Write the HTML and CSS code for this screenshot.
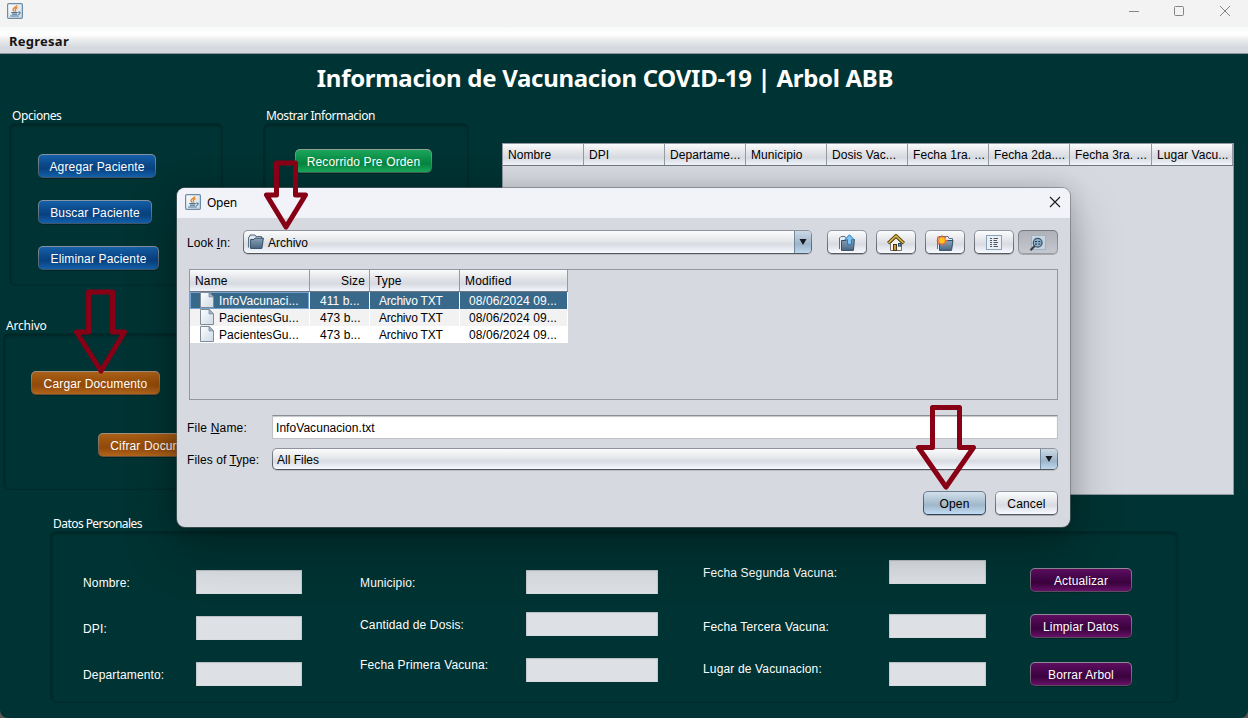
FILE: index.html
```html
<!DOCTYPE html>
<html lang="es">
<head>
<meta charset="utf-8">
<title>Informacion de Vacunacion</title>
<link rel="stylesheet" href="styles.css">
</head>
<body>
<svg class="defs" width="0" height="0">
  <defs>
    <linearGradient id="steel" x1="0" y1="0" x2="0" y2="1"><stop offset="0" stop-color="#88a1b8"/><stop offset="1" stop-color="#4a6782"/></linearGradient>
    <linearGradient id="sheet" x1="0" y1="0" x2="1" y2="1"><stop offset="0" stop-color="#fdfeff"/><stop offset="1" stop-color="#ccd9e4"/></linearGradient>
    <symbol id="java" viewBox="0 0 16 16">
      <rect x=".6" y=".6" width="14.8" height="14.8" rx="1.2" fill="url(#sheet)" stroke="#6c8ba5" stroke-width="1.2"/>
      <path d="M9.9 2.3C9.6 3.9 6 5 6 6.6c0 1 .9 1.5 1.4 2M10.6 4.7C8.7 5.4 7.9 6.2 8.5 7.1c.4.6.2 1-.2 1.4" fill="none" stroke="#e98425" stroke-width="1.3"/>
      <path d="M4.3 9.5h6.4M4.9 11.2h5.3M3 13h8.8M11.3 9.2c2.7-.6 2.2 1.9-.2 2.3" fill="none" stroke="#4b7593" stroke-width="1.2"/>
    </symbol>
    <symbol id="folder" viewBox="0 0 16 16">
      <path d="M.6 13.5V3.2L2 2V1h5l1 1.600h5.500V5" fill="#dde4eb" stroke="#4b647b"/>
      <path d="M2.600 14.400V5.500H6l1-1.400h8.400L13.900 14.400z" fill="url(#steel)" stroke="#354f67"/>
    </symbol>
    <symbol id="doc" viewBox="0 0 14 16">
      <path d="M.5.5h8.700l4.300 4.300v10.700H.5z" fill="url(#sheet)" stroke="#7f8b97"/>
      <path d="M9 .6v4.300h4.400z" fill="#a9bccb" stroke="#6e8395" stroke-width=".7"/>
    </symbol>
    <symbol id="arrow-down" viewBox="0 0 8 7"><path d="M.5.5h7L4 6.600z" fill="#16181b"/></symbol>
  </defs>
</svg>
<div class="window">
  <header class="titlebar">
    <svg class="app-icon"><use href="#java"/></svg>
    <svg class="win-controls" width="104" height="14" viewBox="0 0 104 14">
      <path d="M1 7.5h10" />
      <rect x="46.5" y="2.500" width="9" height="9" rx="1"/>
      <path d="M92 2l10 10M102 2L92 12"/>
    </svg>
  </header>
  <nav class="menubar"><span class="menu-item">Regresar</span></nav>
  <main class="content">
    <h1 class="heading"><span class="heading-text">Informacion de Vacunacion COVID-19 | Arbol ABB</span></h1>
    <div class="upper">
      <div class="left-col">
        <section class="panel opciones">
          <h2 class="panel-title">Opciones</h2>
          <div class="panel-box">
            <button class="btn blue agregar">Agregar Paciente</button>
            <button class="btn blue buscar">Buscar Paciente</button>
            <button class="btn blue eliminar">Eliminar Paciente</button>
          </div>
        </section>
        <section class="panel archivo">
          <h2 class="panel-title">Archivo</h2>
          <div class="panel-box">
            <button class="btn orange cargar">Cargar Documento</button>
            <button class="btn orange cifrar">Cifrar Documento</button>
          </div>
        </section>
      </div>
      <section class="panel mostrar">
        <h2 class="panel-title">Mostrar Informacion</h2>
        <div class="panel-box"><button class="btn green">Recorrido Pre Orden</button></div>
      </section>
      <div class="patients">
        <div class="patients-head">
          <span>Nombre</span><span>DPI</span><span>Departame...</span><span>Municipio</span><span>Dosis Vac...</span><span>Fecha 1ra. ...</span><span>Fecha 2da....</span><span>Fecha 3ra. ...</span><span>Lugar Vacu...</span>
        </div>
      </div>
    </div>
    <section class="panel datos">
      <h2 class="panel-title">Datos Personales</h2>
      <div class="panel-box">
        <div class="stack labels-a"><label>Nombre:</label><label>DPI:</label><label>Departamento:</label></div>
        <div class="stack fields-a"><i class="field"></i><i class="field"></i><i class="field"></i></div>
        <div class="stack labels-b"><label>Municipio:</label><label>Cantidad de Dosis:</label><label>Fecha Primera Vacuna:</label></div>
        <div class="stack fields-b"><i class="field"></i><i class="field"></i><i class="field"></i></div>
        <div class="stack labels-c"><label>Fecha Segunda Vacuna:</label><label>Fecha Tercera Vacuna:</label><label>Lugar de Vacunacion:</label></div>
        <div class="stack fields-c"><i class="field"></i><i class="field"></i><i class="field"></i></div>
        <div class="stack actions"><button class="btn purple">Actualizar</button><button class="btn purple">Limpiar Datos</button><button class="btn purple">Borrar Arbol</button></div>
      </div>
    </section>
  </main>

  <div class="dialog">
    <header class="dialog-bar">
      <svg class="app-icon"><use href="#java"/></svg>
      <span class="dialog-title">Open</span>
      <svg class="dialog-close" width="12" height="12" viewBox="0 0 12 12"><path d="M1 1l10 10M11 1L1 11"/></svg>
    </header>
    <div class="dialog-body">
      <div class="look-row">
        <span class="look-label">Look <u>I</u>n:</span>
        <div class="combo look-combo">
          <svg class="ico"><use href="#folder"/></svg><span class="combo-text">Archivo</span>
          <span class="combo-arrow"><svg width="8" height="8"><use href="#arrow-down"/></svg></span>
        </div>
        <button class="btn light tool"><svg width="18" height="18" viewBox="0 0 18 18">
          <path d="M1.500 15V4L3 2.500h4l1 1.500" fill="#e6ecf2" stroke="#5b7085"/>
          <path d="M3.500 16.400V6.500H8l1-1h7.400l-1 10.900z" fill="url(#steel)" stroke="#354f67"/>
          <path d="M11.500.8l4.700 5h-2.700v4.500h-4V5.800H6.800z" fill="#7fc4f3" stroke="#2a78b8"/>
        </svg></button>
        <button class="btn light tool"><svg width="18" height="18" viewBox="0 0 18 18">
          <path d="M3.500 9.500v7h11v-7L9 4z" fill="#f6f4ef" stroke="#77716a"/>
          <path d="M1.200 9.300L9 1.800l7.800 7.500" fill="none" stroke="#54430f" stroke-width="3.400"/>
          <path d="M1.600 8.900L9 1.800l7.400 7.100" fill="none" stroke="#d9b246" stroke-width="1.600"/>
          <rect x="6.500" y="10.500" width="3" height="6" fill="#c79b3a" stroke="#4b3b14"/>
          <rect x="11.500" y="9.500" width="2.400" height="2.600" fill="#6fa5d0" stroke="#24435c"/>
        </svg></button>
        <button class="btn light tool"><svg width="18" height="18" viewBox="0 0 18 18">
          <path d="M1.500 15V4L3 2.500h9l1 2h3.500v3" fill="#e6ecf2" stroke="#5b7085"/>
          <path d="M3.500 16.400V7.500H8l1-1h8l-1.500 9.900z" fill="url(#steel)" stroke="#354f67"/>
          <path d="M6 .3l1.200 3.200L10.600 2 9.200 5.200l3 1.300-3 1.300 1.400 3.200-3.400-1.500L6 12.700 4.800 9.500 1.400 11l1.400-3.200-2.800-1.300 2.800-1.300L1.400 2l3.400 1.500z" fill="#f36a32"/>
          <circle cx="6" cy="6.500" r="2.900" fill="#ffc61e"/>
        </svg></button>
        <button class="btn light tool"><svg width="18" height="18" viewBox="0 0 18 18">
          <rect x="1.500" y="1.500" width="15" height="14" fill="#e9eff5" stroke="#8ea2b5"/>
          <path d="M5 4.500h2M5 6.500h2M5 8.500h2M5 10.500h2M5 12.500h2M8.500 4.500H13M8.500 6.500H12M8.500 8.500H13M8.500 10.500H12M8.500 12.500H13" stroke="#4b5661"/>
        </svg></button>
        <button class="btn pressed tool last-tool"><svg width="18" height="18" viewBox="0 0 18 18">
          <rect x="2.500" y="1.500" width="14" height="14" fill="#c8d5e1" stroke="#a0b3c5"/>
          <path d="M6.200 11.500L1.500 16.300" stroke="#39424b" stroke-width="2.200"/>
          <circle cx="8.700" cy="8.800" r="4.400" fill="#8db2cf" stroke="#3f5567" stroke-width="1.300"/>
          <path d="M6 7.500h2M9.200 7.500h2.200M6 10h2M9.200 10h2.200" stroke="#25333f"/>
        </svg></button>
      </div>
      <div class="file-pane">
        <div class="files">
          <div class="file-row file-head"><span>Name</span><span class="size">Size</span><span>Type</span><span>Modified</span></div>
          <div class="file-row selected"><span class="name"><svg class="doc"><use href="#doc"/></svg>InfoVacunaci...</span><span>411 b...</span><span class="kind">Archivo TXT</span><span>08/06/2024 09...</span></div>
          <div class="file-row odd"><span class="name"><svg class="doc"><use href="#doc"/></svg>PacientesGu...</span><span>473 b...</span><span class="kind">Archivo TXT</span><span>08/06/2024 09...</span></div>
          <div class="file-row"><span class="name"><svg class="doc"><use href="#doc"/></svg>PacientesGu...</span><span>473 b...</span><span class="kind">Archivo TXT</span><span>08/06/2024 09...</span></div>
        </div>
      </div>
      <div class="name-row"><span class="row-label">File <u>N</u>ame:</span><div class="name-input">InfoVacunacion.txt</div></div>
      <div class="type-row"><span class="row-label">Files of <u>T</u>ype:</span>
        <div class="combo type-combo"><span class="combo-text">All Files</span><span class="combo-arrow"><svg width="8" height="8"><use href="#arrow-down"/></svg></span></div>
      </div>
      <div class="button-row"><button class="btn default">Open</button><button class="btn light">Cancel</button></div>
    </div>
  </div>

  <svg class="arrows" width="1248" height="718" viewBox="0 0 1248 718">
    <path d="M276.500 163h19v32h10L286 227l-19.500-32h10z"/>
    <path d="M88.500 292h24v40h12L101 371 76.500 332h12z"/>
    <path d="M932.500 407.500h27v40h14L946 487l-27.500-39.500h14z"/>
  </svg>
</div>
</body>
</html>
```

FILE: styles.css
```css
* { box-sizing: border-box; }
body {
  margin: 0;
  width: 1248px;
  height: 718px;
  overflow: hidden;
  background: #5a5652;
  font: 12px/16px "Liberation Sans", Arial, sans-serif;
  letter-spacing: 0.15px;
}
.defs { position: absolute; }
.window {
  position: relative;
  display: flex;
  flex-direction: column;
  width: 1248px;
  height: 718px;
  overflow: hidden;
  border-radius: 0 0 8px 8px;
  background: #003333;
}
.titlebar {
  display: flex;
  justify-content: space-between;
  align-items: flex-start;
  height: 27px;
  padding: 3px 16px 0 7px;
  background: #f3f3f3;
}
.app-icon { width: 16px; height: 16px; flex: none; }
.win-controls { margin-top: 1px; fill: none; stroke: #858585; }
.menubar {
  height: 27px;
  padding: 6px 9px 0;
  border-bottom: 1px solid #8b96a0;
  background: linear-gradient(#f6faf8, #fff 28%, #e9eaec 52%, #d6d9e0 78%, #d5d8df);
}
.menu-item { font: bold 13px/17px "Noto Sans", sans-serif; letter-spacing: 0.25px; color: #161616; }

/* main area */
.content { flex: 1; display: flex; flex-direction: column; color: #fff; }
.heading {
  margin: 0;
  height: 54px;
  padding: 7px 38px 0 0;
  text-align: center;
  font: bold 24px/33px "Noto Sans", sans-serif;
  letter-spacing: -0.3px;
}
.upper { display: flex; height: 408px; padding-left: 3px; }
.left-col { width: 260px; }
.panel-title {
  margin: 0;
  padding-left: 3px;
  height: 15px;
  font: 12px/16px "Noto Sans", sans-serif;
  letter-spacing: -0.42px;
}
.panel-box {
  border: 1px solid #002b2b;
  border-radius: 6px;
  box-shadow: inset 0 2px 3px rgba(0,20,20,.32), inset 1px 0 2px rgba(0,20,20,.18);
}
.opciones { width: 214px; margin-left: 6px; }
.opciones .panel-box {
  display: flex;
  flex-direction: column;
  align-items: flex-start;
  gap: 22px;
  height: 163px;
  padding: 30px 0 0 28px;
}
.archivo { margin-top: 32px; }
.archivo .panel-title { letter-spacing: -0.2px; }
.archivo .panel-box { height: 157px; padding: 37px 0 0 27px; }
.mostrar { width: 206px; }
.mostrar .panel-box { height: 300px; padding: 25px 0 0 31px; }

/* buttons */
.btn {
  display: block;
  height: 24px;
  padding: 1px 0 0;
  border: 1px solid transparent;
  border-radius: 5px;
  font: inherit;
  letter-spacing: inherit;
  line-height: 22px;
  color: #fff;
  text-align: center;
  box-shadow: 0 1px 0 rgba(0,0,0,.22);
}
.blue { background: linear-gradient(#1660a8, #0b4a8c 40%, #08427f 62%, #1360ab) padding-box, linear-gradient(#8595a3, #3f5468) border-box; }
.orange { background: linear-gradient(#aa6018, #98500b 40%, #92490a 62%, #b1661b) padding-box, linear-gradient(#a09080, #63503b) border-box; }
.green { width: 137px; background: linear-gradient(#1ca55a, #0c9049 40%, #07843f 62%, #19ab5d) padding-box, linear-gradient(#8aa395, #3e6351) border-box; }
.purple { width: 102px; background: linear-gradient(#5f0e60, #45064a 40%, #3a023c 62%, #661168) padding-box, linear-gradient(#948a97, #5c4a60) border-box; }
.light { color: #000; background: linear-gradient(#fbfcfd, #e4e6ea 40%, #d8dbe2 60%, #f7faff) padding-box, linear-gradient(#969ba5, #55585f) border-box; }
.default { color: #000; background: linear-gradient(#d2dfea, #abc0d2 45%, #a0b7cb 60%, #c3dcf3) padding-box, linear-gradient(#6d8295, #2f4154) border-box; }
.pressed { background: linear-gradient(#b0b2b8, #babcc3 50%, #c6c8cf) padding-box, linear-gradient(#75787f, #999ca4) border-box; }
.agregar { width: 118px; }
.buscar { width: 114px; }
.eliminar { width: 121px; }
.cargar { width: 129px; }
.cifrar { width: 121px; margin: 38px 0 0 67px; }

/* patients table */
.patients {
  width: 732px;
  height: 352px;
  margin: 35px 0 0 33px;
  border: 1px solid #9297a1;
  background: #d6d9e0;
}
.patients-head {
  display: grid;
  grid-template-columns: repeat(7, 81px) 82px 81px;
  height: 22px;
  border-bottom: 1px solid #70757f;
  background: linear-gradient(#fafbfb, #e2e4e8 40%, #d7dae1 65%, #f1f5fb);
  color: #000;
}
.patients-head span { padding-left: 5px; line-height: 22px; border-right: 1px solid #969aa3; white-space: nowrap; overflow: hidden; letter-spacing: 0.08px; }

/* personal data form */
.datos { width: 1128px; margin-left: 50px; }
.datos .panel-title { letter-spacing: -0.55px; }
.datos .panel-box { display: flex; height: 172px; padding-left: 32px; }
.stack { display: flex; flex-direction: column; padding-top: 38px; flex: none; }
.stack label { height: 24px; line-height: 26px; }
.field {
  display: block;
  height: 24px;
  background: #dde1e6;
  box-shadow: inset 0 1px 1px #b9bcc2, inset 1px 0 1px #c8cbd0, inset -1px 0 1px #c8cbd0;
}
.labels-a { width: 113px; gap: 22px; }
.fields-a { width: 106px; gap: 22px; }
.labels-b { width: 166px; margin-left: 58px; gap: 18px; }
.labels-b label:last-child { margin-top: -2px; }
.fields-b { width: 132px; gap: 18px; }
.fields-b .field:last-child { margin-top: 4px; }
.labels-c { width: 186px; margin-left: 45px; padding-top: 28px; gap: 30px; }
.labels-c label:last-child { margin-top: -12px; }
.fields-c { width: 97px; padding-top: 28px; gap: 30px; }
.fields-c .field:last-child { margin-top: -6px; }
.actions { margin-left: 44px; padding-top: 36px; gap: 22px; }
.actions .btn:last-child { margin-top: 2px; }

/* file chooser: floats over the main window */
.dialog {
  position: absolute;
  left: 177px;
  top: 188px;
  width: 893px;
  height: 339px;
  border-radius: 8px;
  overflow: hidden;
  background: #d6d9e0;
  color: #000;
  box-shadow: 0 0 0 1px rgba(100,105,110,.55), 0 22px 50px 2px rgba(0,0,0,.27), 0 0 22px rgba(0,0,0,.16);
}
.dialog-bar { display: flex; align-items: flex-start; height: 30px; padding: 6px 9px 0 8px; background: #f1f3f9; }
.dialog-title { margin-left: 6px; font: 12px/18px "Noto Sans", sans-serif; letter-spacing: -0.25px; }
.dialog-close { margin: 2px 0 0 auto; fill: none; stroke: #1a1a1a; stroke-width: 1.1; }
.dialog-body { padding: 12px 12px 0 10px; }
.look-row { display: flex; height: 24px; letter-spacing: 0.08px; }
.look-label { width: 56px; line-height: 26px; }
.combo {
  display: flex;
  align-items: center;
  height: 24px;
  border: 1px solid transparent;
  border-radius: 5px;
  overflow: hidden;
  background: linear-gradient(#fcfcfd, #e6e8eb 42%, #d8dbe1 60%, #f6f9fe) padding-box, linear-gradient(#8f949e, #50545c) border-box;
  box-shadow: 0 1px 0 rgba(0,0,0,.12);
}
.look-combo { width: 569px; padding-left: 4px; margin-right: 15px; }
.ico { width: 16px; height: 16px; margin-right: 4px; }
.combo-text { flex: 1; padding-top: 2px; letter-spacing: 0; }
.combo-arrow {
  display: flex;
  align-items: center;
  justify-content: center;
  width: 17px;
  height: 100%;
  border-left: 1px solid #71899d;
  background: linear-gradient(#ccd9e5, #a9bed1 45%, #9db5ca 60%, #c0d8ee);
}
.tool { display: flex; align-items: center; justify-content: center; width: 40px; margin-right: 9px; }
.tool:nth-last-child(2) { margin-right: 4px; }
.last-tool { margin-right: 0; }
.file-pane { width: 869px; height: 131px; margin: 15px 0 0 2px; border: 1px solid #9297a1; }
.files { width: 378px; }
.file-row { display: grid; grid-template-columns: 120px 60px 90px 108px; height: 17px; line-height: 18px; background: #fff; letter-spacing: 0.08px; }
.file-row span { padding-left: 9px; border-right: 1px solid #fff; white-space: nowrap; overflow: hidden; }
.file-row span:nth-child(2) { padding-left: 10px; }
.file-row .name { display: flex; padding-left: 9px; }
.file-row .kind { letter-spacing: -0.2px; }
.file-row.odd { background: #f2f2f2; }
.file-row.selected { background: #39698a; color: #fff; }
.selected .name { box-shadow: inset 0 0 0 1px #73a4d1; }
.doc { width: 14px; height: 16px; margin: 0 5px 0 1px; }
.file-row.file-head {
  height: 22px;
  line-height: 22px;
  letter-spacing: 0.15px;
  border-bottom: 1px solid #70757f;
  background: linear-gradient(#fafbfb, #e2e4e8 40%, #d7dae1 65%, #f1f5fb);
}
.file-head span { padding-left: 5px; border-right-color: #969aa3; }
.file-head .size { text-align: right; padding-right: 4px; }
.name-row { display: flex; margin-top: 15px; height: 24px; }
.row-label { width: 85px; line-height: 26px; letter-spacing: 0.08px; }
.name-row .row-label { letter-spacing: 0.2px; }
.type-row .row-label { line-height: 25px; }
.name-input {
  width: 786px;
  padding-left: 3px;
  line-height: 24px;
  letter-spacing: 0.05px;
  background: #fff;
  border: 1px solid #c0c2c6;
  border-top-color: #8b8e93;
  box-shadow: inset 0 1px 1px #c4c6ca;
}
.type-row { display: flex; margin-top: 9px; height: 22px; }
.type-combo { width: 786px; height: 22px; padding-left: 4px; }
.button-row { display: flex; justify-content: flex-end; gap: 9px; margin-top: 21px; }
.button-row .btn { width: 63px; }

/* hand-drawn pointers over everything */
.arrows { position: absolute; left: 0; top: 0; fill: none; stroke: #880015; stroke-width: 5; stroke-linejoin: round; pointer-events: none; }
```
